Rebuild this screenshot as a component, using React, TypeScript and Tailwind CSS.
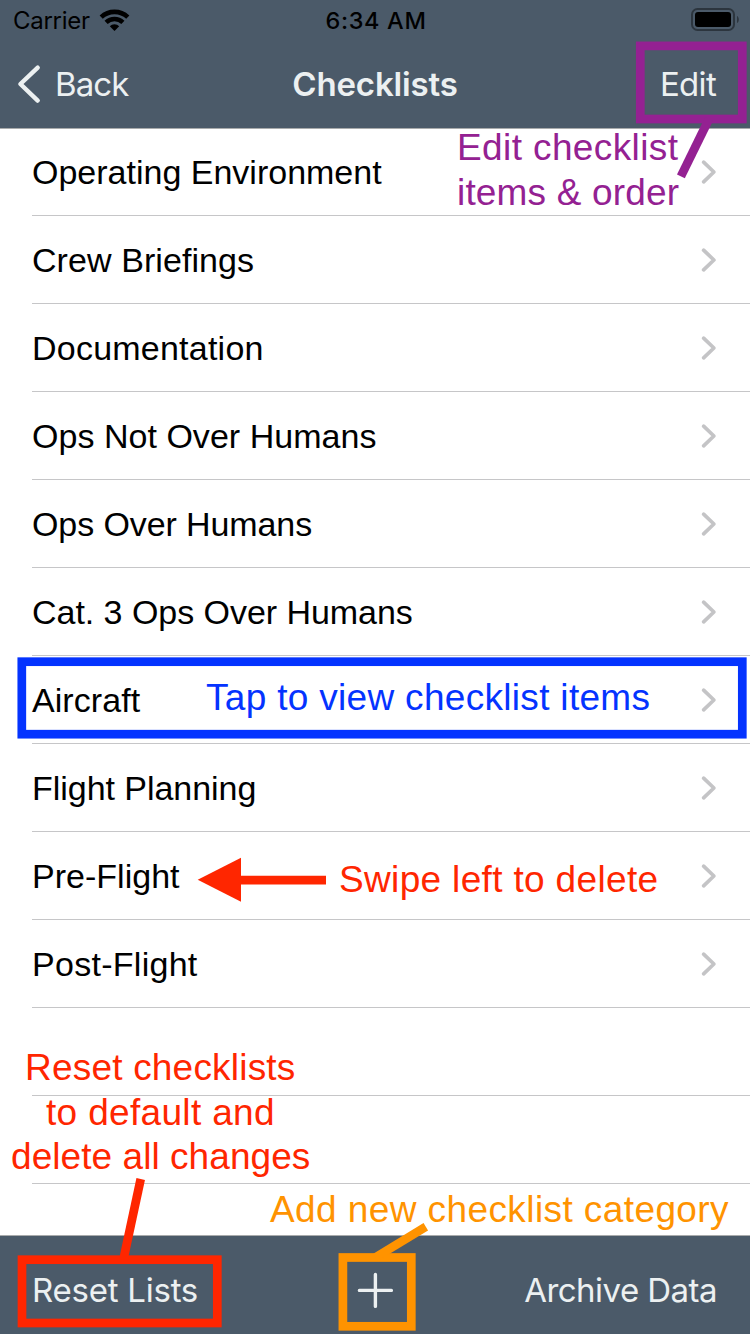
import React from 'react';

type Item = { label: string; tracking: string };

const items: Item[] = [
  { label: 'Operating Environment', tracking: 'tracking-[0px]' },
  { label: 'Crew Briefings', tracking: 'tracking-[0.07px]' },
  { label: 'Documentation', tracking: 'tracking-[0.23px]' },
  { label: 'Ops Not Over Humans', tracking: 'tracking-[0.03px]' },
  { label: 'Ops Over Humans', tracking: 'tracking-[-0.1px]' },
  { label: 'Cat. 3 Ops Over Humans', tracking: 'tracking-[-0.04px]' },
  { label: 'Aircraft', tracking: 'tracking-[0.06px]' },
  { label: 'Flight Planning', tracking: 'tracking-[-0.04px]' },
  { label: 'Pre-Flight', tracking: 'tracking-[0.02px]' },
  { label: 'Post-Flight', tracking: 'tracking-[0.28px]' },
];

function StatusBar() {
  return (
    <div className="grid h-10 grid-cols-3 items-center text-[24px] text-black">
      <div className="flex items-center pl-[13px]">
        <span className="pt-[2px] tracking-[-0.27px]">Carrier</span>
        <svg className="ml-[8px] h-[24px] w-[32px]" viewBox="98 8 32 24">
          <g fill="none" stroke="#000" strokeWidth="4.6">
            <path d="M101.2 17.2A19.4 19.4 0 0 1 127.8 17.2" />
            <path d="M106.1 22.4A12.2 12.2 0 0 1 122.9 22.4" />
          </g>
          <path d="M114.5 31L109.8 26.2A6.6 6.6 0 0 1 119.2 26.2Z" fill="#000" />
        </svg>
      </div>
      <span className="pt-[2px] pl-[2px] text-center text-[23.5px] font-medium tracking-[0.65px]">6:34 AM</span>
      <svg className="mr-[10px] h-[24px] w-[50px] justify-self-end" viewBox="690 8 50 24">
        <rect x="692" y="9" width="42" height="21" rx="5.5" fill="none" stroke="#2c353e" strokeWidth="2" />
        <rect x="695" y="12" width="36" height="15" rx="3" fill="#000" />
        <path d="M737 16c2.4 1 2.4 6 0 7z" fill="#2c353e" />
      </svg>
    </div>
  );
}

function NavBar() {
  return (
    <div className="grid h-[88px] grid-cols-3 items-center text-[33px] text-[#ecf0f1]">
      <div className="flex items-center pl-[16px]">
        <svg className="h-[40px] w-[26px]" viewBox="16 64 26 40" fill="none" stroke="#ecf0f1" strokeWidth="4.4" strokeLinecap="round" strokeLinejoin="round">
          <path d="M37.7 67.7L20.4 84L37.7 100.6" />
        </svg>
        <span className="ml-[13px] pt-[2px] tracking-[-0.9px]">Back</span>
      </div>
      <span className="pt-[2px] text-center font-semibold tracking-[-0.15px]">Checklists</span>
      <span className="pt-[2px] pr-[34px] text-right tracking-[-0.7px]">Edit</span>
    </div>
  );
}

function Row({ item }: { item: Item }) {
  return (
    <li className="ml-8 flex h-[88px] items-center justify-between border-b border-[#c6c6c8] pt-px pr-[32px]">
      <span className={'text-[34px] leading-[44px] whitespace-nowrap text-black ' + item.tracking}>{item.label}</span>
      <svg className="h-[26px] w-[18px]" viewBox="700 687 18 26" fill="none" stroke="#c4c4c6" strokeWidth="3.7" strokeLinecap="round" strokeLinejoin="round">
        <path d="M703.6 690.2L713.9 700L703.6 709.8" />
      </svg>
    </li>
  );
}

function Toolbar() {
  return (
    <footer className="h-[99px] border-t border-[#a9abac] bg-[#4b5a69] pt-[10px] font-[Inter,sans-serif] text-[33px] text-[#ecf0f1]">
      <div className="grid h-[88px] grid-cols-3 items-center">
        <span className="pt-[2px] pl-[32px] tracking-[-0.24px]">Reset Lists</span>
        <svg className="h-[40px] w-[40px] justify-self-center" viewBox="355 1270 40 40" stroke="#ecf0f1" strokeWidth="3.4" strokeLinecap="round">
          <path d="M359.4 1290.4H391.4M375.4 1274.4V1306.4" />
        </svg>
        <span className="pt-[2px] pr-[33px] text-right whitespace-nowrap tracking-[-0.54px]">Archive Data</span>
      </div>
    </footer>
  );
}

function Notes() {
  return (
    <div className="pointer-events-none absolute inset-0 text-[37px] leading-[45px] whitespace-nowrap">
      <svg className="absolute inset-0 h-full w-full" viewBox="0 0 750 1334" fill="none" strokeWidth="8.7">
        <g stroke="#942192">
          <rect x="640.3" y="45.9" width="102" height="73.1" />
          <path d="M709 119L680.9 176.4" />
        </g>
        <rect x="21.8" y="661.7" width="720.5" height="72.5" stroke="#0433ff" />
        <g stroke="#ff2600">
          <rect x="22" y="1259.7" width="195.3" height="63.3" />
          <path d="M123.4 1259.7L140.7 1179" />
          <path d="M240 880.2H326" />
          <path d="M197.7 879.8L241 857.8V901.8Z" fill="#ff2600" stroke="none" />
        </g>
        <g stroke="#ff9300">
          <rect x="342.9" y="1257.5" width="68.4" height="68.8" />
          <path d="M375.5 1257.4L425.8 1226.7" />
        </g>
      </svg>
      <span className="absolute top-[125px] left-[457px] tracking-[0.39px] text-[#942192]">Edit checklist</span>
      <span className="absolute top-[170px] left-[457px] tracking-[0.17px] text-[#942192]">items &amp; order</span>
      <span className="absolute top-[675px] left-[206px] tracking-[0.31px] text-[#0433ff]">Tap to view checklist items</span>
      <span className="absolute top-[857px] left-[339px] tracking-[0.34px] text-[#ff2600]">Swipe left to delete</span>
      <span className="absolute top-[1045px] left-[25px] tracking-[0.2px] text-[#ff2600]">Reset checklists</span>
      <span className="absolute top-[1090px] left-[46px] tracking-[0.33px] text-[#ff2600]">to default and</span>
      <span className="absolute top-[1134px] left-[11px] tracking-[0.06px] text-[#ff2600]">delete all changes</span>
      <span className="absolute top-[1187px] left-[270px] tracking-[0.41px] text-[#ff9300]">Add new checklist category</span>
    </div>
  );
}

export default function App() {
  return (
    <div className="relative flex h-[1334px] w-[750px] flex-col overflow-hidden bg-white font-['Liberation_Sans',Arial,sans-serif]">
      <header className="h-[128px] bg-[#4b5a69] font-[Inter,sans-serif]">
        <StatusBar />
        <NavBar />
      </header>
      <ul className="flex-1 shadow-[inset_0_1px_0_#a9abac]">
        {items.map((item) => (
          <Row key={item.label} item={item} />
        ))}
        <li className="ml-8 h-[88px] border-b border-[#c6c6c8]" />
        <li className="ml-8 h-[88px] border-b border-[#c6c6c8]" />
      </ul>
      <Toolbar />
      <Notes />
    </div>
  );
}
